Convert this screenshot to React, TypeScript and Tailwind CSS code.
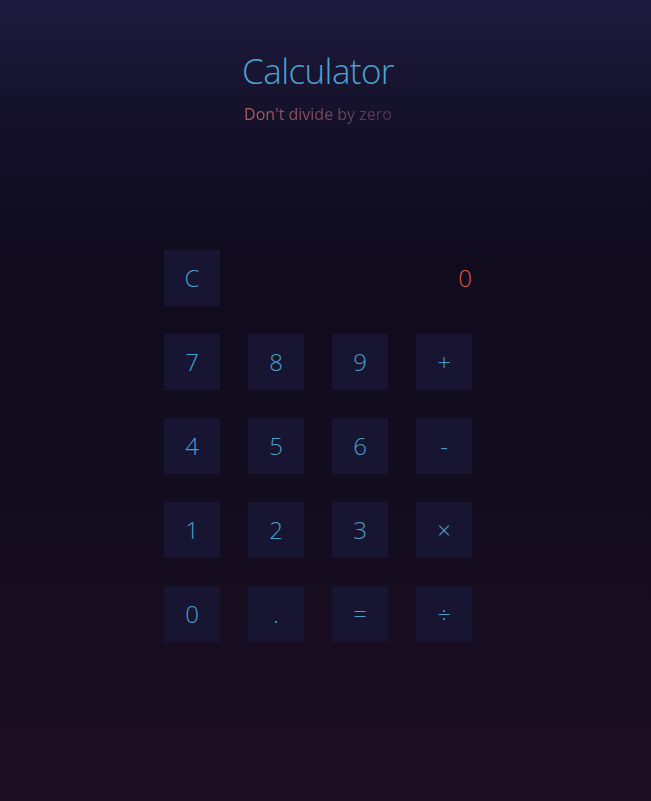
import React, { useState } from "react";

const KEYS = ["7", "8", "9", "+", "4", "5", "6", "-", "1", "2", "3", "×", "0", ".", "=", "÷"];

export default function App() {
  const [display, setDisplay] = useState("0");

  const press = (k: string) => {
    if (k === "C") return setDisplay("0");
    setDisplay((d) => (d === "0" ? k : d + k));
  };

  return (
    <div
      className="min-h-[801px] w-full bg-[linear-gradient(to_bottom,#1d1b3e_0%,#130f26_18%,#100c1e_32%,#110c1e_55%,#1e0f22_100%)] pr-[15px]"
      style={{ fontFamily: '"Open Sans", "Noto Sans", sans-serif' }}
    >
      <div className="flex flex-col items-center pt-[49px]">
        <h1 className="text-[35px] font-light leading-[44px] tracking-[-0.6px] text-[#4ca2d2]">Calculator</h1>
        <p className="mt-[10px] bg-gradient-to-r from-[#b4605f] to-[#4c3456] bg-clip-text text-[16px] leading-[22px] text-transparent">
          Don't divide by zero
        </p>

        {/* keypad */}
        <div className="mt-[125px] grid grid-cols-4 gap-[28px]">
          <button
            onClick={() => press("C")}
            className="flex h-[56px] w-[56px] items-center justify-center bg-[#181533] text-[24px] font-light text-[#4a9fca]"
          >
            C
          </button>
          <div className="col-span-3 flex items-center justify-end text-[24px] font-light text-[#de5648]">
            {display}
          </div>
          {KEYS.map((k) => (
            <button
              key={k}
              onClick={() => press(k)}
              className="flex h-[56px] w-[56px] items-center justify-center bg-[#181533] text-[24px] font-light text-[#4a9fca]"
            >
              {k}
            </button>
          ))}
        </div>
      </div>
    </div>
  );
}
